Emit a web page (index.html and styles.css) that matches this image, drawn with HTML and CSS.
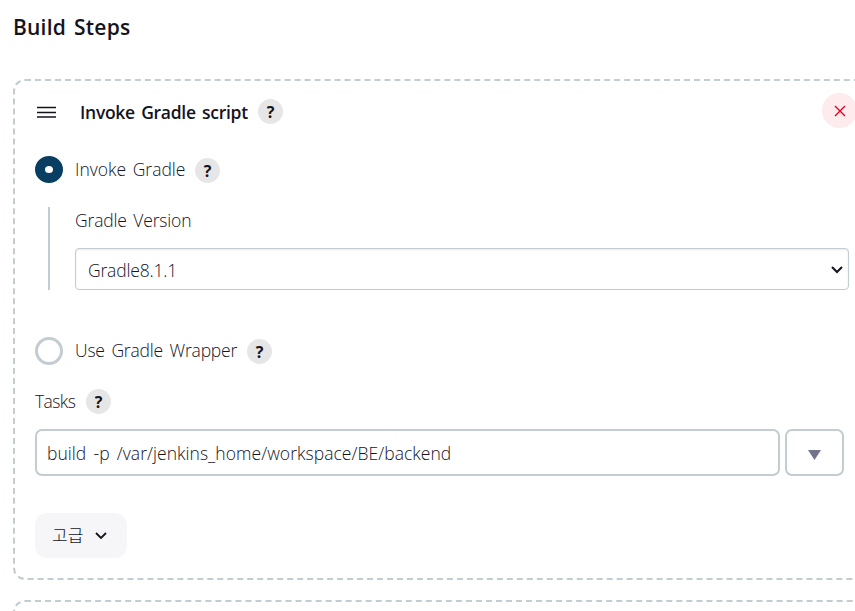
FILE: index.html
```html
<!DOCTYPE html>
<html lang="ko">
<head>
<meta charset="utf-8">
<title>Build Steps</title>
<link rel="stylesheet" href="styles.css">
</head>
<body>
<main class="page">
  <h1 class="title"><span class="t-title">Build Steps</span></h1>
  <section class="card">
    <header class="card-head">
      <svg class="grip" width="19" height="12" viewBox="0 0 19 12"><path d="M.5 1.500h18M.5 6.500h18M.5 11h18" stroke="#14141f" stroke-width="1.700" stroke-linecap="round"/></svg>
      <h2 class="step-name"><span class="t-step">Invoke Gradle script</span></h2>
      <span class="help">?</span>
      <button class="remove" aria-label="Remove"><svg width="12" height="12" viewBox="0 0 12 12"><path d="M1 1l10 10M11 1L1 11" stroke="#e6001f" stroke-width="1.4"/></svg></button>
    </header>
    <div class="choice first">
      <span class="radio checked"></span>
      <span class="label t-invoke">Invoke Gradle</span>
      <span class="help">?</span>
    </div>
    <div class="nested">
      <div class="label version-label"><span class="t-version">Gradle Version</span></div>
      <div class="select"><span class="label t-value">Gradle8.1.1</span>
        <svg width="12" height="8" viewBox="0 0 12 8"><path d="M1 1l5 5 5-5" fill="none" stroke="#14141f" stroke-width="2"/></svg>
      </div>
    </div>
    <div class="choice second">
      <span class="radio"></span>
      <span class="label t-wrapper">Use Gradle Wrapper</span>
      <span class="help">?</span>
    </div>
    <div class="tasks">
      <span class="label t-tasks">Tasks</span>
      <span class="help">?</span>
    </div>
    <div class="task-row">
      <div class="input"><span class="label t-build">build -p /var/jenkins_home/workspace/BE/backend</span></div>
      <button class="expand" aria-label="Expand"><svg width="13" height="10" viewBox="0 0 13 10"><path d="M0 0h13L6.500 10z" fill="#73738c"/></svg></button>
    </div>
    <button class="advanced"><span class="t-adv">고급</span>
      <svg width="12" height="8" viewBox="0 0 12 8"><path d="M1 1l5 5 5-5" fill="none" stroke="#14141f" stroke-width="1.8"/></svg>
    </button>
  </section>
  <section class="card next"></section>
</main>
</body>
</html>
```
FILE: styles.css
```css
* { box-sizing: border-box; }
html, body { margin: 0; height: 100%; overflow: hidden; background: #fff; }
body { font-family: "Open Sans", "Noto Sans CJK KR", sans-serif; color: #14141f; }
button { border: 0; padding: 0; font: inherit; color: inherit; }
svg { display: block; }
.page { width: 874px; height: 611px; padding: 12px 0 0 13px; overflow: hidden; }
.title { margin: 0 0 37px; height: 30px; line-height: 30px; font-size: 21px; font-weight: 600; white-space: nowrap; letter-spacing: .2px; word-spacing: 2.5px; }
.card { width: 861px; height: 501px; border: 2px dashed #c3ccd1; border-radius: 12px; padding: 12px 0 0 20px; }
.next { margin-top: 20px; height: 120px; }
.card-head { display: flex; align-items: center; width: 822px; height: 35px; }
.grip { margin: 3px 24px 0 2px; }
.step-name { width: 168px; margin: 3px 10px 0 0; font-size: 17.5px; line-height: 26px; font-weight: 600; white-space: nowrap; letter-spacing: -.28px; word-spacing: 2px; }
.help { width: 25px; height: 25px; flex: none; border-radius: 50%; background: #e6e6e6; font-size: 16px; font-weight: 700; line-height: 26px; text-align: center; }
.card-head .help { margin-top: 2px; }
.remove { display: grid; place-items: center; width: 35px; height: 35px; margin-left: auto; border-radius: 50%; background: #fdebed; }
.label { font-size: 17.5px; line-height: 26px; font-weight: 300; color: #14141f; white-space: nowrap; }
.choice { display: flex; align-items: center; height: 28px; }
.choice .help { margin: 2px 0 0 10px; }
.first { margin-top: 27px; }
.radio { width: 28px; height: 28px; flex: none; border: 3px solid #c3ccd1; border-radius: 50%; margin-right: 12px; }
.checked { height: 27px; margin-top: 1px; border: 10px solid #073e61; }
.nested { height: 83px; margin: 24px 0 0 13px; border-left: 2px solid #c3ccd1; padding-left: 25px; }
.version-label { height: 41px; }
.select { display: flex; align-items: center; justify-content: space-between; width: 774px; height: 42px; border: 1px solid #c3ccd1; border-radius: 4px; padding: 2px 5px 0 12px; box-shadow: inset 0 1px 2px rgba(20,20,31,.09); }
.second { margin-top: 47px; }
.second .help { margin-top: 0; }
.tasks { display: flex; align-items: center; height: 26px; margin-top: 23px; }
.tasks .help { margin-left: 10px; }
.task-row { display: flex; gap: 5px; margin-top: 15px; }
.input { width: 745px; height: 47px; border: 2px solid #c3ccd1; border-radius: 7px; padding: 9px 10px; }
.expand { display: grid; place-items: center; width: 59px; height: 47px; padding-top: 4px; border: 2px solid #c3ccd1; border-radius: 7px; background: #fff; }
.advanced { display: flex; align-items: center; gap: 12px; width: 92px; height: 45px; margin-top: 37px; padding-left: 17px; border-radius: 12px; background: #f6f6f9; font-size: 17px; font-weight: 300; }
.t-invoke { width: 110px; word-spacing: 2px; }
.t-version { letter-spacing: -.15px; word-spacing: 2px; }
.t-value { letter-spacing: -.18px; }
.t-wrapper { width: 162px; margin-top: -2px; letter-spacing: -.2px; word-spacing: 2.3px; }
.t-tasks { width: 41px; letter-spacing: -.6px; }
.t-build { display: inline-block; letter-spacing: .04px; word-spacing: 2.6px; }
.t-adv { margin-top: -3px; }
```
